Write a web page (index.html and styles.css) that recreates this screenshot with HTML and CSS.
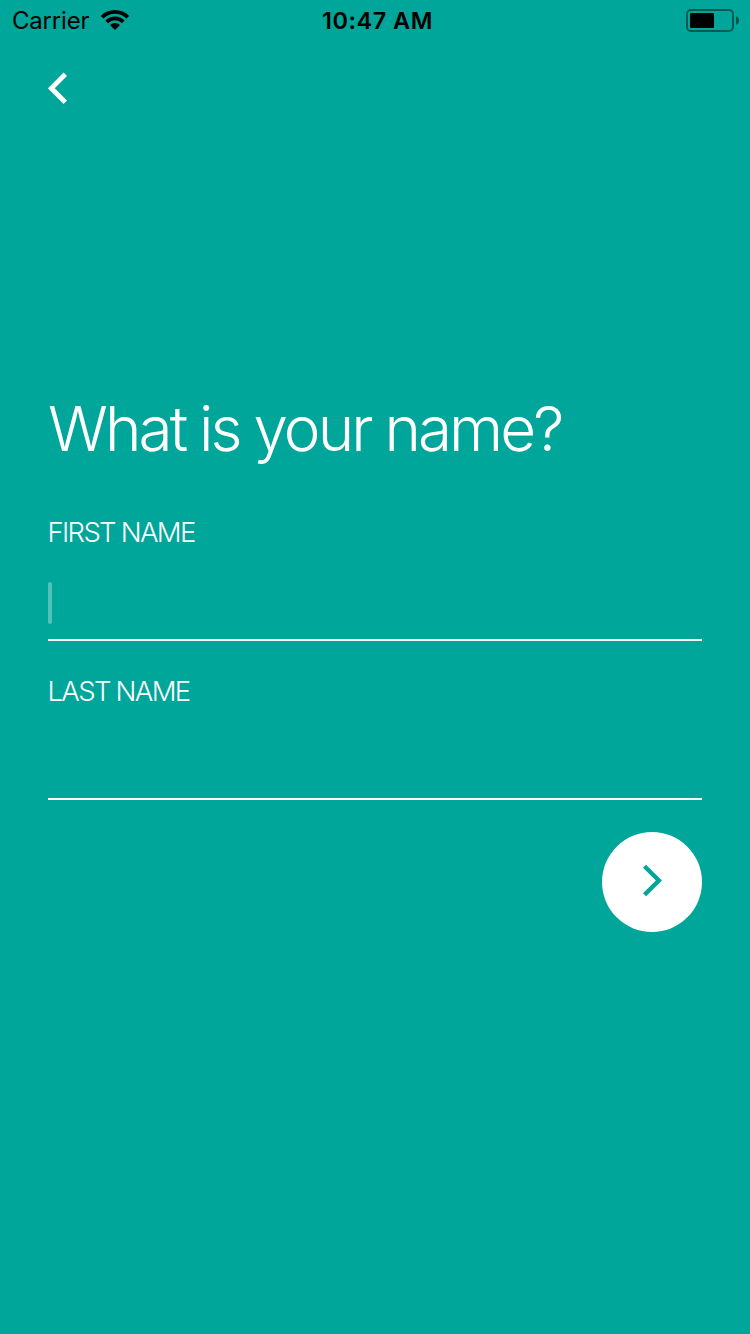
FILE: index.html
```html
<!DOCTYPE html>
<html lang="en">
<head>
<meta charset="utf-8">
<title>What is your name?</title>
<link rel="stylesheet" href="styles.css">
</head>
<body>
<div class="screen">
  <header class="status">
    <div class="status-left">
      <span class="carrier">Carrier</span>
      <svg class="wifi" width="30" height="22" viewBox="0 0 30 22">
        <path d="M.8 6.9a20 20 0 0 1 28.4 0l-2.7 2.7a16.3 16.3 0 0 0-23 0z"/>
        <path d="M5.4 11.5a13.6 13.6 0 0 1 19.2 0l-2.7 2.7a9.8 9.8 0 0 0-13.8 0z"/>
        <path d="M10 16.1a7 7 0 0 1 10 0l-5 4.9z"/>
      </svg>
    </div>
    <span class="time">10:47 AM</span>
    <svg class="battery" width="54" height="24" viewBox="0 0 54 24">
      <rect class="battery-case" x="1" y="1" width="46" height="21" rx="4"/>
      <rect x="4" y="4" width="24" height="15" rx="1"/>
      <path class="battery-tip" d="M50 7.3q3 1 3 4.2t-3 4.2z"/>
    </svg>
  </header>
  <button class="back" aria-label="Back">
    <svg class="chevron chevron-bold" width="20" height="32" viewBox="0 0 20 32"><path d="M17.300 2.300L3.300 16.300l14 14"/></svg>
  </button>
  <main class="form">
    <h1 class="title">What is your name?</h1>
    <div class="fields">
      <label class="field">
        <span class="label">FIRST NAME</span>
        <span class="input"><span class="caret"></span></span>
      </label>
      <label class="field">
        <span class="label">LAST NAME</span>
        <span class="input"></span>
      </label>
    </div>
    <button class="next" aria-label="Next">
      <svg class="chevron" width="20" height="32" viewBox="0 0 20 32"><path d="M2.500 2.300L16.900 16.500 2.500 30.700"/></svg>
    </button>
  </main>
</div>
</body>
</html>
```
FILE: styles.css
```css
* { box-sizing: border-box; }
body { margin: 0; }
.screen {
  width: 750px;
  height: 1334px;
  background: #00a699;
  color: #fff;
  font-family: Inter, "Liberation Sans", sans-serif;
  overflow: hidden;
}
.status {
  display: grid;
  grid-template-columns: 1fr auto 1fr;
  align-items: center;
  height: 40px;
  padding: 0 10px 0 12px;
  color: #000;
  font-size: 24px;
  line-height: 40px;
}
.status-left { display: flex; align-items: center; }
.carrier { width: 88px; padding-top: 2px; line-height: 38px; letter-spacing: -.2px; }
.time { padding: 2px 0 0 3px; font-size: 23.500px; font-weight: 600; line-height: 38px; letter-spacing: .5px; }
.battery { justify-self: end; margin-top: 2px; }
.battery-case { fill: none; stroke: #000; stroke-width: 2; opacity: .45; }
.battery-tip { opacity: .5; }
.back, .next { display: flex; border: 0; padding: 0; }
.back {
  margin: 32px 0 0 48px;
  background: none;
  color: #fff;
}
.chevron { fill: none; stroke: currentColor; stroke-width: 4.400; }
.chevron-bold { stroke-width: 4.800; }
.form { padding: 286px 48px 0; }
.title {
  margin: 0 0 47px;
  font-size: 62px;
  font-weight: 300;
  line-height: 78px;
  letter-spacing: -2.950px;
  word-spacing: -.600px;
  white-space: nowrap;
}
.fields { display: grid; gap: 33px; margin-bottom: 32px; }
.field { display: block; }
.label {
  display: block;
  height: 34px;
  font-size: 27.500px;
  font-weight: 300;
  line-height: 34px;
  letter-spacing: -1.650px;
  word-spacing: -.300px;
  text-indent: -.500px;
}
.input {
  display: block;
  height: 92px;
  padding-top: 33px;
  border-bottom: 2px solid #fff;
}
.caret {
  display: block;
  width: 4px;
  height: 42px;
  border-radius: 2px;
  background: rgba(255, 255, 255, .32);
}
.next {
  align-items: center;
  justify-content: center;
  width: 100px;
  height: 100px;
  margin-left: auto;
  padding-bottom: 4px;
  border-radius: 50%;
  background: #fff;
  color: #00a699;
}
```
